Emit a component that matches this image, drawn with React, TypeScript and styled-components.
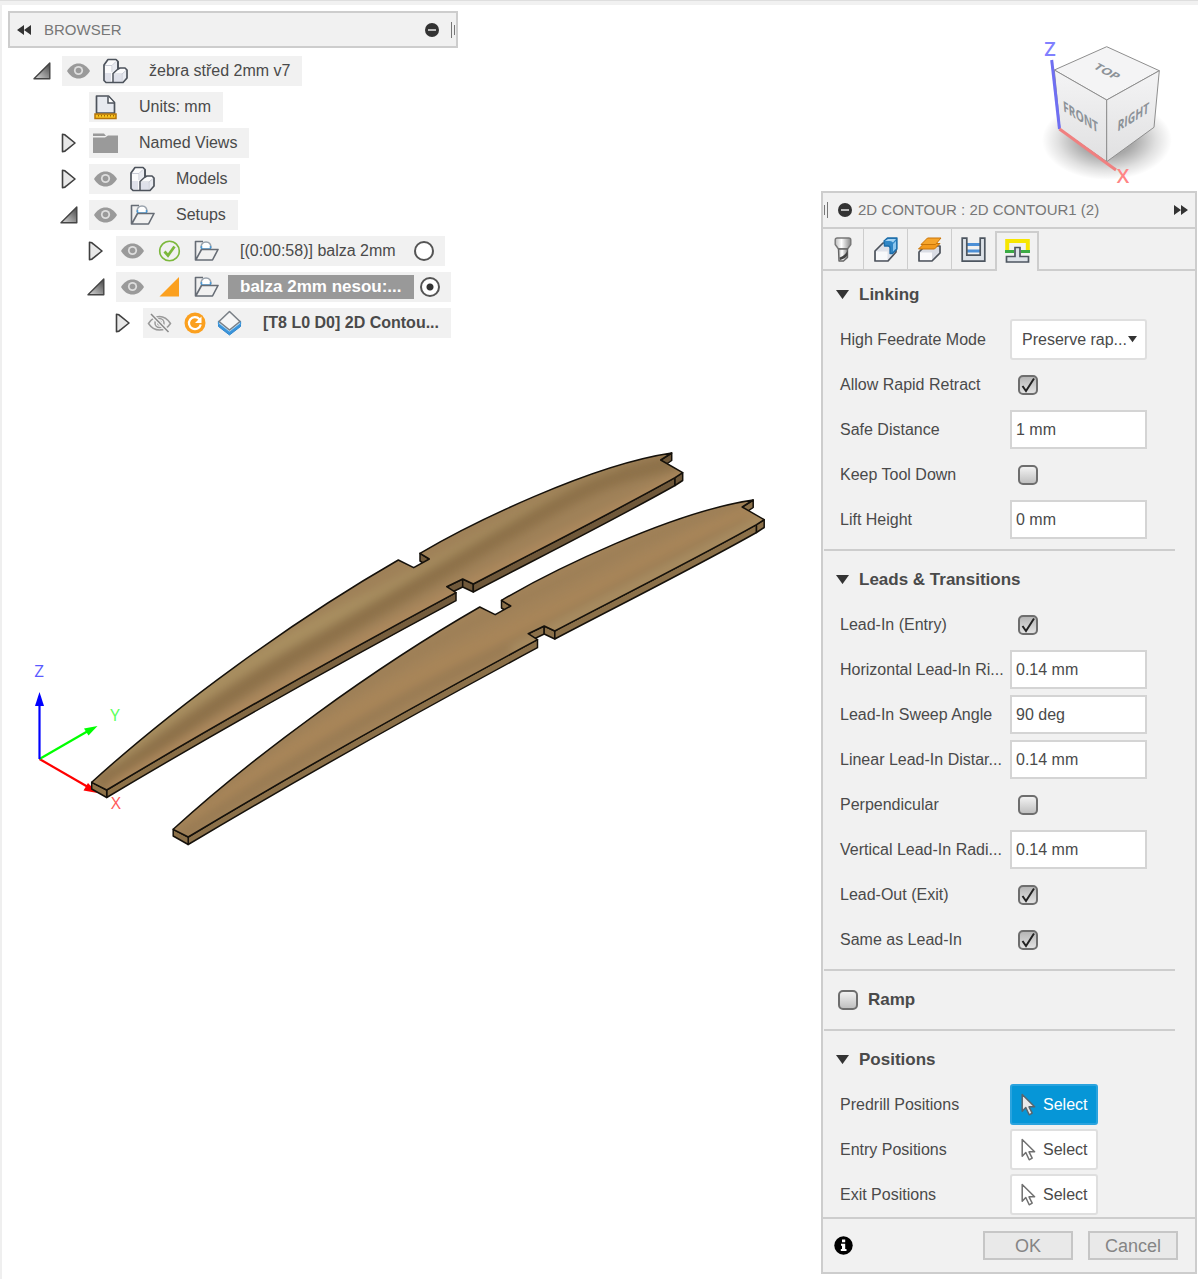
import React, { useId, useState } from "react";
import styled, { createGlobalStyle, css } from "styled-components";

const GlobalStyle = createGlobalStyle`
  *, *::before, *::after { box-sizing: border-box; }
  body {
    margin: 0;
    background: #ffffff;
    color: #4a4a4a;
    font-family: "Liberation Sans", Arial, sans-serif;
    font-size: 16px;
    line-height: 20px;
  }
  button, input, select { font: inherit; color: inherit; }
  svg { display: block; flex: none; }
`;

/* ---------- page frame ---------- */

const Page = styled.div`
  display: flex;
  flex-direction: column;
  min-height: 100vh;
`;

const TopStrip = styled.div`
  height: 5px;
  background: #f1f1f1;
  border-top: 1px solid #dedede;
`;

const Viewport = styled.main`
  flex: 1;
  display: grid;
  grid-template-columns: minmax(0, 1fr) 376px;
  padding-right: 1px;
  border-left: 2px solid #efefef;
`;

const SceneSvg = styled.svg`
  grid-area: 1 / 1 / 2 / 3;
  width: 100%;
  height: 100%;
  min-height: 860px;
`;

const LeftColumn = styled.aside`
  grid-area: 1 / 1 / 2 / 2;
  padding: 6px 0 0 6px;
`;

const RightColumn = styled.aside`
  grid-area: 1 / 2 / 2 / 3;
  padding-bottom: 5px;
`;

/* ---------- browser tree ---------- */

const BrowserHeader = styled.header`
  display: flex;
  align-items: center;
  gap: 12px;
  width: 450px;
  max-width: 100%;
  height: 37px;
  padding: 0 1px 0 6px;
  background: #f1f1f1;
  border: 2px solid #cdcdcd;
`;

const PanelTitle = styled.h2`
  flex: 1;
  margin: 0;
  font-size: 15px;
  font-weight: 400;
  color: #777777;
  white-space: nowrap;
`;

const IconButton = styled.button`
  display: flex;
  padding: 0;
  border: 0;
  background: none;
`;

const Grip = styled.span<{ $flip?: boolean }>`
  display: flex;
  flex-direction: ${(p) => (p.$flip ? "row-reverse" : "row")};
  align-items: center;
  gap: 2px;
  &::before,
  &::after {
    content: "";
    width: 1px;
    height: 16px;
    background: #777777;
  }
  &::after {
    height: 10px;
  }
`;

const Tree = styled.ul`
  margin: 5px 0 0;
  padding: 0 0 0 25px;
  list-style: none;
`;

const TreeRow = styled.li<{ $depth: number }>`
  display: flex;
  align-items: center;
  height: 36px;
  margin-left: ${(p) => p.$depth * 27}px;
`;

const ArrowSlot = styled.span`
  flex: none;
  width: 29px;
`;

const NodeChip = styled.div<{ $radio?: boolean }>`
  display: flex;
  align-items: center;
  height: 30px;
  padding-left: 4px;
  padding-right: ${(p) => (p.$radio ? 11 : 0)}px;
  background: #f1f1f1;
`;

const IconGroup = styled.span<{ $tight?: boolean }>`
  display: flex;
  align-items: center;
  gap: ${(p) => (p.$tight ? 10 : 12)}px;
`;

const NodeLabel = styled.label<{ $state?: "selected" | "bold" }>`
  display: flex;
  align-items: center;
  height: 24px;
  margin-left: 9px;
  padding: 0 12px;
  white-space: nowrap;
  ${(p) => p.$state === "bold" && css`font-weight: 700;`}
  ${(p) =>
    p.$state === "selected" &&
    css`
      font-weight: 700;
      font-size: 17px;
      color: #ffffff;
      background: #999999;
    `}
`;

const SetupRadio = styled.input`
  appearance: none;
  flex: none;
  width: 20px;
  height: 20px;
  margin: 0 0 0 6px;
  border: 2px solid #555555;
  border-radius: 50%;
  background: #ffffff;
  &:checked {
    background: radial-gradient(circle, #333333 0 3px, #ffffff 4px);
  }
`;

/* ---------- view cube ---------- */

const CubeBox = styled.div`
  display: flex;
  justify-content: flex-end;
  padding: 26px 19px 0 0;
`;

/* ---------- contour panel ---------- */

const Panel = styled.form`
  background: #f1f1f1;
  border: 2px solid #cdcdcd;
`;

const PanelHeader = styled.header`
  display: flex;
  align-items: center;
  gap: 6px;
  height: 36px;
  padding: 0 6px 0 1px;
  border-bottom: 2px solid #cdcdcd;
`;

const CollapseButton = styled(IconButton)`
  padding-left: 4px;
`;

const TabBar = styled.div`
  display: flex;
  height: 42px;
  &::after {
    content: "";
    flex: 1;
    border-bottom: 2px solid #cdcdcd;
  }
`;

const Tab = styled.button<{ $active: boolean }>`
  display: flex;
  align-items: center;
  justify-content: center;
  width: 44px;
  margin: 0;
  padding: 2px 0 0;
  background: none;
  border: 0 solid #cdcdcd;
  border-bottom-width: 2px;
  &:first-child {
    width: 40px;
  }
  &:not(:first-child) {
    border-left-width: 1px;
  }
  ${(p) =>
    p.$active &&
    css`
      && {
        margin-top: 2px;
        padding: 0 0 2px;
        border-width: 2px 2px 0;
      }
    `}
`;

const PanelBody = styled.div`
  padding-top: 1px;
`;

const Section = styled.section`
  & + & {
    padding-top: 6px;
  }
  &:not(:last-child)::after {
    content: "";
    display: block;
    height: 2px;
    margin: 7px 20px 0 1px;
    background: #cdcdcd;
  }
`;

const SectionHead = styled.h3`
  display: flex;
  align-items: center;
  height: 45px;
  margin: 0;
  padding-left: 13px;
  font-size: 17px;
`;

const SectionToggle = styled.button`
  display: flex;
  align-items: center;
  gap: 10px;
  padding: 0;
  border: 0;
  background: none;
`;

const RampLabel = styled.label`
  display: flex;
  align-items: center;
  gap: 10px;
  padding-left: 2px;
`;

const Row = styled.div`
  display: grid;
  grid-template-columns: 170px 1fr;
  align-items: center;
  height: 45px;
  padding-left: 17px;
`;

const RowLabel = styled.label`
  white-space: nowrap;
`;

const ValueInput = styled.input`
  width: 137px;
  height: 39px;
  padding: 0 4px;
  border: 2px solid #d4d4d4;
  border-radius: 0;
  background: #ffffff;
  outline: none;
`;

const SelectBox = styled.span`
  display: grid;
  align-items: center;
  width: 137px;
  height: 41px;
  border: 2px solid #dfdfdf;
  border-radius: 3px;
  background: #ffffff;
  & > * {
    grid-area: 1 / 1;
  }
  & > svg {
    justify-self: end;
    margin-right: 8px;
    pointer-events: none;
  }
`;

const ModeSelect = styled.select`
  appearance: none;
  width: 100%;
  height: 37px;
  min-width: 0;
  padding: 0 0 0 10px;
  border: 0;
  background: none;
  outline: none;
`;

const Tick = styled.span<{ $inset?: boolean }>`
  display: grid;
  width: 20px;
  height: 20px;
  margin-left: ${(p) => (p.$inset ? 8 : 0)}px;
  & > * {
    grid-area: 1 / 1;
  }
  & > svg {
    visibility: hidden;
    pointer-events: none;
  }
  & > input:checked + svg {
    visibility: visible;
  }
`;

const TickInput = styled.input`
  appearance: none;
  width: 20px;
  height: 20px;
  margin: 0;
  border: 2px solid #6e6e6e;
  border-radius: 5px;
  background: linear-gradient(#f2f2f2, #c0c0c0);
  &:checked {
    background: linear-gradient(#b6b6b6, #e2e2e2);
  }
`;

const PickButton = styled.button<{ $active?: boolean }>`
  display: flex;
  align-items: center;
  gap: 7px;
  width: 88px;
  height: 41px;
  padding: 0 0 0 9px;
  border: 2px solid ${(p) => (p.$active ? "#2aa3de" : "#dfdfdf")};
  border-radius: 3px;
  background: ${(p) => (p.$active ? "#0696d7" : "#ffffff")};
  color: ${(p) => (p.$active ? "#ffffff" : "#4a4a4a")};
`;

const PanelFooter = styled.footer`
  display: flex;
  align-items: center;
  gap: 15px;
  height: 55px;
  padding: 0 17px 0 11px;
  border-top: 2px solid #cdcdcd;
`;

const InfoButton = styled(IconButton)`
  margin-right: auto;
`;

const DialogButton = styled.button`
  width: 90px;
  height: 29px;
  padding: 0;
  border: 2px solid #c6c6c6;
  background: #e9e9e9;
  color: #858585;
  font-size: 18px;
`;

/* ---------- icons ---------- */

const DoubleArrow = ({ right }: { right?: boolean }) => (
  <svg width="16" height="12" viewBox="0 0 16 12" fill="#333">
    {right ? <path d="M1 1l7 5-7 5zM8 1l7 5-7 5z" /> : <path d="M15 1L8 6l7 5zM8 1L1 6l7 5z" />}
  </svg>
);

const MinusDot = () => (
  <svg width="14" height="14" viewBox="0 0 14 14">
    <circle cx="7" cy="7" r="7" fill="#333" />
    <path d="M3 7h8" stroke="#ddd" strokeWidth="1.6" />
  </svg>
);

const Expanded = () => (
  <svg width="18" height="18" viewBox="0 0 18 18">
    <defs>
      <linearGradient id="expandedFill" x1="0" y1="1" x2="1" y2="0">
        <stop offset="0" stopColor="#ddd" />
        <stop offset="1" stopColor="#444" />
      </linearGradient>
    </defs>
    <path d="M1 16.8H16.8V1z" fill="url(#expandedFill)" stroke="#444" strokeWidth="1.4" strokeLinejoin="round" />
  </svg>
);

const Collapsed = () => (
  <svg width="18" height="20" viewBox="0 0 18 20">
    <path d="M2.500 1.200c2 0 3 .5 4 2L15 10l-8.500 6.800c-1 1.500-2 2-4 2z" fill="#e8e8e8" stroke="#3f3f3f" strokeWidth="1.600" strokeLinejoin="round" />
  </svg>
);

const Eye = () => (
  <svg width="25" height="18" viewBox="0 0 25 18">
    <path d="M1 9C4 4 8 1.500 12.500 1.500S21 4 24 9c-3 5-7 7.500-11.500 7.500S4 14 1 9z" fill="#9a9a9a" />
    <circle cx="12.500" cy="8.500" r="4.600" fill="#dedede" />
    <circle cx="12.500" cy="8.500" r="2.800" fill="#9a9a9a" />
  </svg>
);

const EyeOff = () => (
  <svg width="25" height="20" viewBox="0 0 25 20" fill="none" stroke="#9a9a9a" strokeWidth="1.500">
    <path d="M1.500 10.500C4.500 6 8.500 3.500 12.500 3.500s8 2.500 11 7c-3 4.500-7 6.500-11 6.500s-8-2-11-6.500z" />
    <circle cx="12.500" cy="10" r="4.500" />
    <circle cx="12.500" cy="10" r="1.800" />
    <path d="M4 1l17.500 18" stroke="#f1f1f1" strokeWidth="4" />
    <path d="M4 1l17.500 18" stroke="#888" />
  </svg>
);

const Component = () => (
  <svg width="25" height="26" viewBox="0 0 25 26" strokeLinejoin="round">
    <path d="M1 7L5 1.500h8l2 2V11l2-1h5l2 2v8l-4 4.500H3l-2-2z" fill="#fbfbfc" />
    <path d="M2 15h6v8.500H2zM10.500 17h8v7h-8z" fill="#dfe1ea" />
    <path d="M10 7l4-4v8l-4 3zM19 16l4-3v7l-4 4z" fill="#e9ebf1" />
    <path d="M1.500 7.500H9l4-4M9 7.500V14M11 16h8l4-3.500M19 16v8" fill="none" stroke="#c9ccd6" />
    <path d="M15 3.500V11l-5 4.500v9" fill="none" stroke="#4d535c" strokeWidth="1.500" />
    <path d="M1 7L5 1.500h8l2 2V11l2-1h5l2 2v8l-4 4.500H3l-2-2z" fill="none" stroke="#4d535c" strokeWidth="1.700" />
  </svg>
);

const UnitsDoc = () => (
  <svg width="25" height="26" viewBox="0 0 25 26">
    <path d="M3.500 19V2h12l6 6.500V19z" fill="#e7eaf0" stroke="#4d535c" strokeWidth="1.700" strokeLinejoin="round" />
    <path d="M15 2.500V9h6" fill="#fff" stroke="#4d535c" strokeWidth="1.500" />
    <rect x="2" y="20" width="21" height="4.500" fill="#f9c21f" stroke="#b57408" strokeWidth="1.500" />
    <path d="M5.500 21v1.500M8.500 21v1.500M11.500 21v1.500M14.500 21v1.500M17.500 21v1.500M20.500 21v1.500" stroke="#a06a00" />
  </svg>
);

const ViewsFolder = () => (
  <svg width="25" height="22" viewBox="0 0 25 22" fill="#9a9a9a">
    <path d="M0 1.500h11l2 2.500H0zM0 5.500h12l3-2h10V21H0z" />
  </svg>
);

const SetupFolder = () => (
  <svg width="25" height="22" viewBox="0 0 25 22" fill="none" strokeLinejoin="round">
    <path d="M7 8c0-4 2-6 5-6s5 2 5 6" stroke="#9aa3ad" strokeWidth="1.500" fill="#fff" />
    <path d="M7.500 6v3h9V6" stroke="#4c9bd8" strokeWidth="1.500" />
    <path d="M9 1.500H1.500V20h17L24 9.500H7.500L2 19.500" stroke="#666c75" strokeWidth="1.600" />
  </svg>
);

const ValidMark = () => (
  <svg width="25" height="24" viewBox="0 0 25 24" fill="none" stroke="#7cb83c">
    <circle cx="12.500" cy="12" r="9.800" strokeWidth="1.600" />
    <path d="M7.500 12.500l3.500 4 6.500-9" strokeWidth="2.800" />
  </svg>
);

const OutdatedMark = () => (
  <svg width="25" height="22" viewBox="0 0 25 22">
    <path d="M2.500 20.500h19.500V1z" fill="#fba01f" />
  </svg>
);

const Regenerate = () => (
  <svg width="25" height="24" viewBox="0 0 25 24">
    <circle cx="13" cy="12" r="10.500" fill="#fba01f" />
    <path d="M17.500 8.200A6 6 0 1 0 18.800 13.500" fill="none" stroke="#fff" strokeWidth="2.200" />
    <path d="M19.500 5.500v6.500H13z" fill="#fff" />
  </svg>
);

const ContourOp = () => (
  <svg width="25" height="26" viewBox="0 0 25 26" strokeLinejoin="round">
    <path d="M1.500 14.500v2L12.500 25l11-8.500v-2L12.500 23z" fill="#3c97dd" stroke="#2f86cc" />
    <path d="M1.500 11.500v2.500l11 8.500 11-8.500v-2.500z" fill="#bfe0f7" stroke="#3c97dd" strokeWidth="1.300" />
    <path d="M12.500 1.500L23 11.500 12.500 20 2 11.500z" fill="#f6f6f6" stroke="#7a8087" strokeWidth="1.600" />
  </svg>
);

const CaretDown = ({ size = 13 }: { size?: number }) => (
  <svg width={size} height={size * 0.7} viewBox="0 0 13 9">
    <path d="M0 0h13L6.500 9z" fill="#333" />
  </svg>
);

const CheckMark = () => (
  <svg width="20" height="20" viewBox="0 0 20 20">
    <path d="M4.500 11l3.500 5L16 3.500" fill="none" stroke="#222" strokeWidth="2" />
  </svg>
);

const Cursor = ({ active }: { active?: boolean }) => (
  <svg width="15" height="23" viewBox="0 0 15 23">
    <path
      d="M1.200 1.500v16.800l3.600-3.800 3.400 7.300 3-1.600-3.200-6.400h5.600z"
      fill={active ? "#e9e9e9" : "#fff"}
      stroke={active ? "#59656d" : "#707070"}
      strokeWidth="1.500"
      strokeLinejoin="round"
    />
  </svg>
);

const InfoIcon = () => (
  <svg width="19" height="19" viewBox="0 0 19 19">
    <circle cx="9.500" cy="9.500" r="9.200" fill="#000" />
    <path d="M8 3.500h3.200v2.700H8zM7 7.800h4.200v5.200h1.300v2H6.800v-2H8V9.800H7z" fill="#fff" />
  </svg>
);

const ToolTabIcon = () => (
  <svg width="18" height="26" viewBox="0 0 18 26" strokeLinejoin="round">
    <defs>
      <linearGradient id="toolMetal">
        <stop offset="0" stopColor="#bbb" />
        <stop offset=".4" stopColor="#fff" />
        <stop offset="1" stopColor="#888" />
      </linearGradient>
    </defs>
    <path d="M1.200 3q0-2 2-2h11.600q2 0 2 2v4.500L13.500 12H4.500L1.200 7.500z" fill="url(#toolMetal)" stroke="#777" strokeWidth="1.400" />
    <path d="M4.500 12h9v8.500L9.500 24H5z" fill="url(#toolMetal)" stroke="#666" strokeWidth="1.400" />
    <path d="M5.500 20.500c3-1 6.500-3.500 8-7v4.500c-2 3-4 4-7.500 5z" fill="#444" />
  </svg>
);

const GeometryTabIcon = () => (
  <svg width="24" height="26" viewBox="0 0 24 26" strokeLinejoin="round">
    <path d="M1 14l8-8h13v9l-8 9H1z" fill="#dfe2ea" stroke="#4d535c" strokeWidth="1.700" />
    <path d="M2 14.500h11.500v8.500H2z" fill="#f8f9fb" />
    <path d="M10 4l3.500-3H23v11l-4.500 4.500H16V11q0-2-2-2h-3.500z" fill="#2f86c6" stroke="#1c6ca8" strokeWidth="1.300" />
    <path d="M11 4l3-2h8l-3 3.500q-1-1.500-3-1.500z" fill="#a4d3f3" />
    <path d="M19 7l3-3v7.500l-3 3z" fill="#8cc6ee" />
  </svg>
);

const HeightsTabIcon = () => (
  <svg width="25" height="26" viewBox="0 0 25 26" strokeLinejoin="round">
    <path d="M2 15l6-6h15v7l-8 8H2z" fill="#d9dce4" stroke="#4d535c" strokeWidth="1.700" />
    <path d="M3 15.500h12v7.500H3z" fill="#fafafc" />
    <path d="M1.500 12L7 6.500h16L17.500 12z" fill="#f39a1d" stroke="#c97508" />
    <path d="M4 7.500L10.500 1H24l-5.500 6.500z" fill="#f6a52c" stroke="#c97508" />
  </svg>
);

const PassesTabIcon = () => (
  <svg width="25" height="26" viewBox="0 0 25 26">
    <path d="M6 7.500h13M6 14h13" stroke="#4c8fd6" strokeWidth="3" />
    <path d="M1.200 1.200h4.600v17h13.400v-17h4.600v23H1.200z" fill="#dde2e8" stroke="#4d5660" strokeWidth="1.700" />
  </svg>
);

const LinkingTabIcon = () => (
  <svg width="25" height="26" viewBox="0 0 25 26">
    <path d="M2.200 12V3h20.600v9" fill="none" stroke="#f7e600" strokeWidth="4" />
    <path d="M0 13.500h9M16 13.500h9" stroke="#3bab45" strokeWidth="3" />
    <path d="M10 9.500h5v9h8.500v5.500h-22v-5.500H10z" fill="#dde2e8" stroke="#4d5660" strokeWidth="1.700" />
  </svg>
);

/* ---------- 3D scene ---------- */

const TOP_FACE =
  "M91.700 782.300C172 709 292 621 398.300 560L413.700 567.700L429.300 559L420 553.300" +
  "C470 524 590 465 671.700 453L660.700 460L682.700 472.700L675 477.700C612 513 540 549 473.300 584" +
  "L462.700 579L446.700 586.700L456 592.700C340 655 220 722 106.700 790Z";

const WALLS = [
  "M660.700 460L671.700 453V460.500L660.700 468Z",
  "M420 553.300L429.300 559V567L420 561Z",
  "M446.700 586.700L462.700 579V587L446.700 594.700Z",
  "M462.700 579L473.300 584V592L462.700 587Z",
  "M473.300 584C540 549 612 513 675 477.700V485.500C612 521 540 557 473.300 592Z",
  "M675 477.700L682.700 472.700V480.500L675 485.500Z",
  "M106.700 790C220 722 340 655 456 592.700V600.700C340 663 220 730 106.700 797.500Z",
  "M91.700 782.300L106.700 790V797.500L91.700 789Z",
];

type Band = { d: string; color: string; width: number };

const BACK_GRAIN: Band[] = [
  { d: "M110 762C180 705 280 640 363 603S540 500 620 472", color: "#a98f61", width: 14 },
  { d: "M100 785C147 753 227 693 313 645S480 548 547 510S630 474 680 460", color: "#8d714a", width: 16 },
  { d: "M110 790C170 752 300 676 400 622S600 520 690 474", color: "#ae895d", width: 12 },
];

const FRONT_GRAIN: Band[] = [
  { d: "M120 752C220 672 330 602 440 552S570 484 660 456", color: "#9d7f56", width: 10 },
  { d: "M110 778C220 690 330 630 440 580S600 494 670 466", color: "#a88559", width: 16 },
  { d: "M100 788C200 722 300 660 400 612S580 514 670 474", color: "#987a52", width: 10 },
  { d: "M430 604C500 564 590 520 690 468", color: "#ab9064", width: 8 },
];

const Rib = ({ base, bands, wall, offset }: { base: string; bands: Band[]; wall: string; offset?: string }) => (
  <g transform={offset} strokeLinejoin="round">
    <g stroke="#15110b" strokeWidth="1.500">
      {WALLS.map((d) => (
        <path key={d} d={d} fill={wall} />
      ))}
    </g>
    <path d={TOP_FACE} fill={base} />
    <g clipPath="url(#faceClip)">
      <g filter="url(#grainBlend)" fill="none">
        {bands.map((b) => (
          <path key={b.d} d={b.d} stroke={b.color} strokeWidth={b.width} />
        ))}
      </g>
    </g>
    <path d={TOP_FACE} fill="none" stroke="#15110b" strokeWidth="1.500" />
  </g>
);

const Scene = () => (
  <SceneSvg role="img" aria-label="Two wooden ribs">
    <defs>
      <clipPath id="faceClip">
        <path d={TOP_FACE} />
      </clipPath>
      <filter id="grainBlend" filterUnits="userSpaceOnUse" x="60" y="420" width="660" height="400">
        <feGaussianBlur stdDeviation="5" />
      </filter>
      <linearGradient id="wallShade" gradientUnits="userSpaceOnUse" x1="92" y1="0" x2="480" y2="0">
        <stop offset="0" stopColor="#8f7349" />
        <stop offset="1" stopColor="#6f583a" />
      </linearGradient>
    </defs>
    <g transform="translate(-2 -5)">
      <g strokeWidth="2.200">
        <path d="M39.500 759L88 787" stroke="#f00" />
        <path d="M97.500 793l-14-2.500 4.500-7.500z" fill="#f00" />
        <path d="M39.500 759L88 731" stroke="#0f0" />
        <path d="M97.500 726l-13.500 2.500 4.500 7z" fill="#0f0" />
        <path d="M39.500 759V704" stroke="#00f" />
        <path d="M39.500 692l4.500 14h-9z" fill="#00f" />
      </g>
      <Rib base="#9f8158" bands={BACK_GRAIN} wall="url(#wallShade)" />
      <Rib base="#a38359" bands={FRONT_GRAIN} wall="#8b7049" offset="translate(81.500 47)" />
      <g fontFamily="'Open Sans', sans-serif" fontSize="17" textAnchor="middle">
        <text x="39" y="677" fill="#5a5aff">Z</text>
        <text x="115" y="721" fill="#5aff5a">Y</text>
        <text x="116" y="809" fill="#ff5a5a">X</text>
      </g>
    </g>
  </SceneSvg>
);

const ViewCube = () => (
  <svg width="144" height="160" viewBox="1034 31 144 160" role="img" aria-label="View cube">
    <defs>
      <radialGradient id="cubeShadow">
        <stop offset=".4" stopColor="#000" stopOpacity=".34" />
        <stop offset=".75" stopColor="#000" stopOpacity=".12" />
        <stop offset="1" stopColor="#000" stopOpacity="0" />
      </radialGradient>
      <linearGradient id="cubeFront" x1="0" y1="0" x2="0" y2="1">
        <stop offset="0" stopColor="#f4f4f5" />
        <stop offset="1" stopColor="#e0e0e1" />
      </linearGradient>
    </defs>
    <ellipse cx="1107" cy="140" rx="65" ry="40" fill="url(#cubeShadow)" />
    <g stroke="#8e8e8e" strokeWidth="1" strokeLinejoin="round">
      <path d="M1106.700 46.700L1159.300 70.700L1106.700 100L1054.300 70Z" fill="#f4f4f5" />
      <path d="M1054.300 70L1106.700 100V161.700L1060 129Z" fill="url(#cubeFront)" />
      <path d="M1159.300 70.700L1106.700 100V161.700L1154 127.300Z" fill="url(#cubeFront)" />
    </g>
    <path d="M1051.700 60L1059.500 129" stroke="#6f6ff2" strokeWidth="3" />
    <path d="M1059.500 129L1116 170" stroke="#f08080" strokeWidth="3" />
    <g fontFamily="'Open Sans', sans-serif" fill="#8c9298" fontSize="14" fontWeight="700" textAnchor="middle">
      <text transform="matrix(.82 .44 -.62 .5 1104 74)">TOP</text>
      <text transform="matrix(.74 .46 .08 1.050 1081 122)">FRONT</text>
      <text transform="matrix(.74 -.46 -.06 1.050 1133 122)">RIGHT</text>
    </g>
    <g fontFamily="'Open Sans', sans-serif" fontSize="20" fontWeight="600" textAnchor="middle">
      <text x="1050" y="56" fill="#8080ff">Z</text>
      <text x="1123" y="183" fill="#ff8585">X</text>
    </g>
  </svg>
);

/* ---------- tree data ---------- */

type Node = {
  depth: number;
  open?: boolean;
  icons: React.FC[];
  label: string;
  state?: "selected" | "bold";
  radio?: boolean;
  tight?: boolean;
};

const NODES: Node[] = [
  { depth: 0, open: true, icons: [Eye, Component], label: "žebra střed 2mm v7" },
  { depth: 1, icons: [UnitsDoc], label: "Units: mm" },
  { depth: 1, open: false, icons: [ViewsFolder], label: "Named Views" },
  { depth: 1, open: false, icons: [Eye, Component], label: "Models" },
  { depth: 1, open: true, icons: [Eye, SetupFolder], label: "Setups" },
  { depth: 2, open: false, icons: [Eye, ValidMark, SetupFolder], label: "[(0:00:58)] balza 2mm", radio: true },
  { depth: 2, open: true, icons: [Eye, OutdatedMark, SetupFolder], label: "balza 2mm nesou:...", state: "selected", radio: true },
  { depth: 3, open: false, icons: [EyeOff, Regenerate, ContourOp], label: "[T8 L0 D0] 2D Contou...", state: "bold", tight: true },
];

const Browser = () => {
  const [active, setActive] = useState(6);
  return (
    <LeftColumn>
      <BrowserHeader>
        <IconButton type="button" aria-label="Collapse browser"><DoubleArrow /></IconButton>
        <PanelTitle>BROWSER</PanelTitle>
        <IconButton type="button" aria-label="Minimize browser"><MinusDot /></IconButton>
        <Grip />
      </BrowserHeader>
      <Tree>
        {NODES.map((n, i) => (
          <TreeRow key={i} $depth={n.depth}>
            <ArrowSlot>
              {n.open !== undefined && (
                <IconButton type="button" aria-label={n.open ? "Collapse" : "Expand"}>
                  {n.open ? <Expanded /> : <Collapsed />}
                </IconButton>
              )}
            </ArrowSlot>
            <NodeChip $radio={n.radio}>
              <IconGroup $tight={n.tight}>
                {n.icons.map((Icon, k) => (
                  <Icon key={k} />
                ))}
              </IconGroup>
              <NodeLabel as={n.radio ? "label" : "span"} htmlFor={n.radio ? `setup-${i}` : undefined} $state={n.state}>
                {n.label}
              </NodeLabel>
              {n.radio && (
                <SetupRadio id={`setup-${i}`} type="radio" name="setup" checked={active === i} onChange={() => setActive(i)} />
              )}
            </NodeChip>
          </TreeRow>
        ))}
      </Tree>
    </LeftColumn>
  );
};

/* ---------- panel rows ---------- */

const TextRow = ({ label, value }: { label: string; value: string }) => {
  const id = useId();
  return (
    <Row>
      <RowLabel htmlFor={id}>{label}</RowLabel>
      <ValueInput id={id} type="text" defaultValue={value} />
    </Row>
  );
};

const CheckRow = ({ label, on }: { label: string; on?: boolean }) => {
  const id = useId();
  return (
    <Row>
      <RowLabel htmlFor={id}>{label}</RowLabel>
      <Tick $inset>
        <TickInput id={id} type="checkbox" defaultChecked={on} />
        <CheckMark />
      </Tick>
    </Row>
  );
};

const PickRow = ({ label, active }: { label: string; active?: boolean }) => {
  const id = useId();
  return (
    <Row>
      <RowLabel htmlFor={id}>{label}</RowLabel>
      <PickButton id={id} type="button" $active={active}>
        <Cursor active={active} />
        Select
      </PickButton>
    </Row>
  );
};

const Heading = ({ children }: { children: React.ReactNode }) => (
  <SectionHead>
    <SectionToggle type="button" aria-expanded="true">
      <CaretDown />
      {children}
    </SectionToggle>
  </SectionHead>
);

const TABS: [string, React.FC][] = [
  ["Tool", ToolTabIcon],
  ["Geometry", GeometryTabIcon],
  ["Heights", HeightsTabIcon],
  ["Passes", PassesTabIcon],
  ["Linking", LinkingTabIcon],
];

const ContourPanel = () => (
  <Panel onSubmit={(e) => e.preventDefault()}>
    <PanelHeader>
      <Grip $flip />
      <CollapseButton type="button" aria-label="Minimize panel"><MinusDot /></CollapseButton>
      <PanelTitle>2D CONTOUR : 2D CONTOUR1 (2)</PanelTitle>
      <IconButton type="button" aria-label="Collapse panel"><DoubleArrow right /></IconButton>
    </PanelHeader>
    <TabBar role="tablist">
      {TABS.map(([name, Icon]) => (
        <Tab key={name} type="button" role="tab" aria-label={name} aria-selected={name === "Linking"} $active={name === "Linking"}>
          <Icon />
        </Tab>
      ))}
    </TabBar>
    <PanelBody>
      <Section>
        <Heading>Linking</Heading>
        <Row>
          <RowLabel htmlFor="feedrate-mode">High Feedrate Mode</RowLabel>
          <SelectBox>
            <ModeSelect id="feedrate-mode">
              <option>Preserve rap...</option>
            </ModeSelect>
            <CaretDown size={9} />
          </SelectBox>
        </Row>
        <CheckRow label="Allow Rapid Retract" on />
        <TextRow label="Safe Distance" value="1 mm" />
        <CheckRow label="Keep Tool Down" />
        <TextRow label="Lift Height" value="0 mm" />
      </Section>
      <Section>
        <Heading>Leads &amp; Transitions</Heading>
        <CheckRow label="Lead-In (Entry)" on />
        <TextRow label="Horizontal Lead-In Ri..." value="0.14 mm" />
        <TextRow label="Lead-In Sweep Angle" value="90 deg" />
        <TextRow label="Linear Lead-In Distar..." value="0.14 mm" />
        <CheckRow label="Perpendicular" />
        <TextRow label="Vertical Lead-In Radi..." value="0.14 mm" />
        <CheckRow label="Lead-Out (Exit)" on />
        <CheckRow label="Same as Lead-In" on />
      </Section>
      <Section>
        <SectionHead>
          <RampLabel>
            <Tick>
              <TickInput type="checkbox" />
              <CheckMark />
            </Tick>
            Ramp
          </RampLabel>
        </SectionHead>
      </Section>
      <Section>
        <Heading>Positions</Heading>
        <PickRow label="Predrill Positions" active />
        <PickRow label="Entry Positions" />
        <PickRow label="Exit Positions" />
      </Section>
    </PanelBody>
    <PanelFooter>
      <InfoButton type="button" aria-label="Information"><InfoIcon /></InfoButton>
      <DialogButton type="submit">OK</DialogButton>
      <DialogButton type="button">Cancel</DialogButton>
    </PanelFooter>
  </Panel>
);

export default function App() {
  return (
    <Page>
      <GlobalStyle />
      <TopStrip />
      <Viewport>
        <Scene />
        <Browser />
        <RightColumn>
          <CubeBox>
            <ViewCube />
          </CubeBox>
          <ContourPanel />
        </RightColumn>
      </Viewport>
    </Page>
  );
}
